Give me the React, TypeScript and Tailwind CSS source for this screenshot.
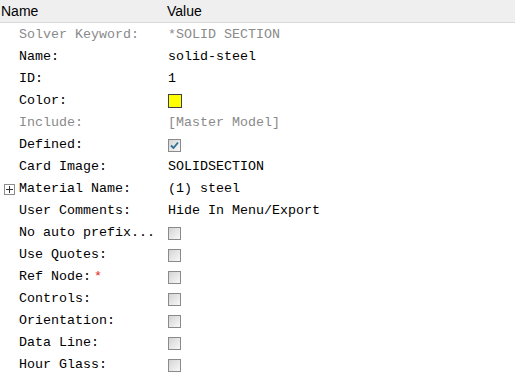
import React from "react";

type Row = {
  label: string;
  kind: "text" | "color" | "check" | "empty";
  value?: string;
  muted?: boolean;
  checked?: boolean;
  expand?: boolean;
  required?: boolean;
};

const ROWS: Row[] = [
  { label: "Solver Keyword:", kind: "text", value: "*SOLID SECTION", muted: true },
  { label: "Name:", kind: "text", value: "solid-steel" },
  { label: "ID:", kind: "text", value: "1" },
  { label: "Color:", kind: "color" },
  { label: "Include:", kind: "text", value: "[Master Model]", muted: true },
  { label: "Defined:", kind: "check", checked: true },
  { label: "Card Image:", kind: "text", value: "SOLIDSECTION" },
  { label: "Material Name:", kind: "text", value: "(1) steel", expand: true },
  { label: "User Comments:", kind: "text", value: "Hide In Menu/Export" },
  { label: "No auto prefix...", kind: "check" },
  { label: "Use Quotes:", kind: "check" },
  { label: "Ref Node:", kind: "check", required: true },
  { label: "Controls:", kind: "check" },
  { label: "Orientation:", kind: "check" },
  { label: "Data Line:", kind: "check" },
  { label: "Hour Glass:", kind: "check" },
];

function CheckBox({ checked }: { checked?: boolean }) {
  return (
    <div className="w-[13px] h-[13px] border border-[#8a8a8a] bg-gradient-to-br from-[#d4d4d4] to-[#f8f8f8] flex items-center justify-center">
      {checked && (
        <svg width="9" height="9" viewBox="0 0 9 9">
          <path d="M1 4.5 L3.5 7 L8 1.5" fill="none" stroke="#2a6f97" strokeWidth="1.8" />
        </svg>
      )}
    </div>
  );
}

export default function App() {
  return (
    <div className="w-[515px] h-[374px] bg-white overflow-hidden">
      <div className="h-[23px] bg-[#efefef] border-b border-[#d9d9d9] flex items-center text-[14px] text-black font-['Liberation_Sans',Arial,sans-serif]">
        <div className="w-[167px] pl-[1px]">Name</div>
        <div>Value</div>
      </div>
      <div className="pt-[1px] font-['Liberation_Mono','DejaVu_Sans_Mono',monospace] text-[13.33px] text-black">
        {ROWS.map((r) => (
          <div key={r.label} className="h-[22px] flex items-center">
            <div className="w-[19px] flex items-center justify-center">
              {r.expand && (
                <div className="w-[11px] h-[11px] border border-[#8c8c8c] bg-white flex items-center justify-center ml-[-1px]">
                  <svg width="9" height="9" viewBox="0 0 9 9">
                    <path d="M1 4.5 H8 M4.5 1 V8" stroke="#333" strokeWidth="1" />
                  </svg>
                </div>
              )}
            </div>
            <div className={`w-[149px] whitespace-pre flex items-center ${r.muted ? "text-[#8a8a8a]" : ""}`}>
              {r.label}
              {r.required && <span className="text-[#e02020] ml-[3px]">*</span>}
            </div>
            <div className={`whitespace-pre ${r.muted ? "text-[#8a8a8a]" : ""}`}>
              {r.kind === "text" && r.value}
              {r.kind === "color" && <div className="w-[14px] h-[14px] bg-[#ffff00] border border-[#404040]" />}
              {r.kind === "check" && <CheckBox checked={r.checked} />}
            </div>
          </div>
        ))}
      </div>
    </div>
  );
}
